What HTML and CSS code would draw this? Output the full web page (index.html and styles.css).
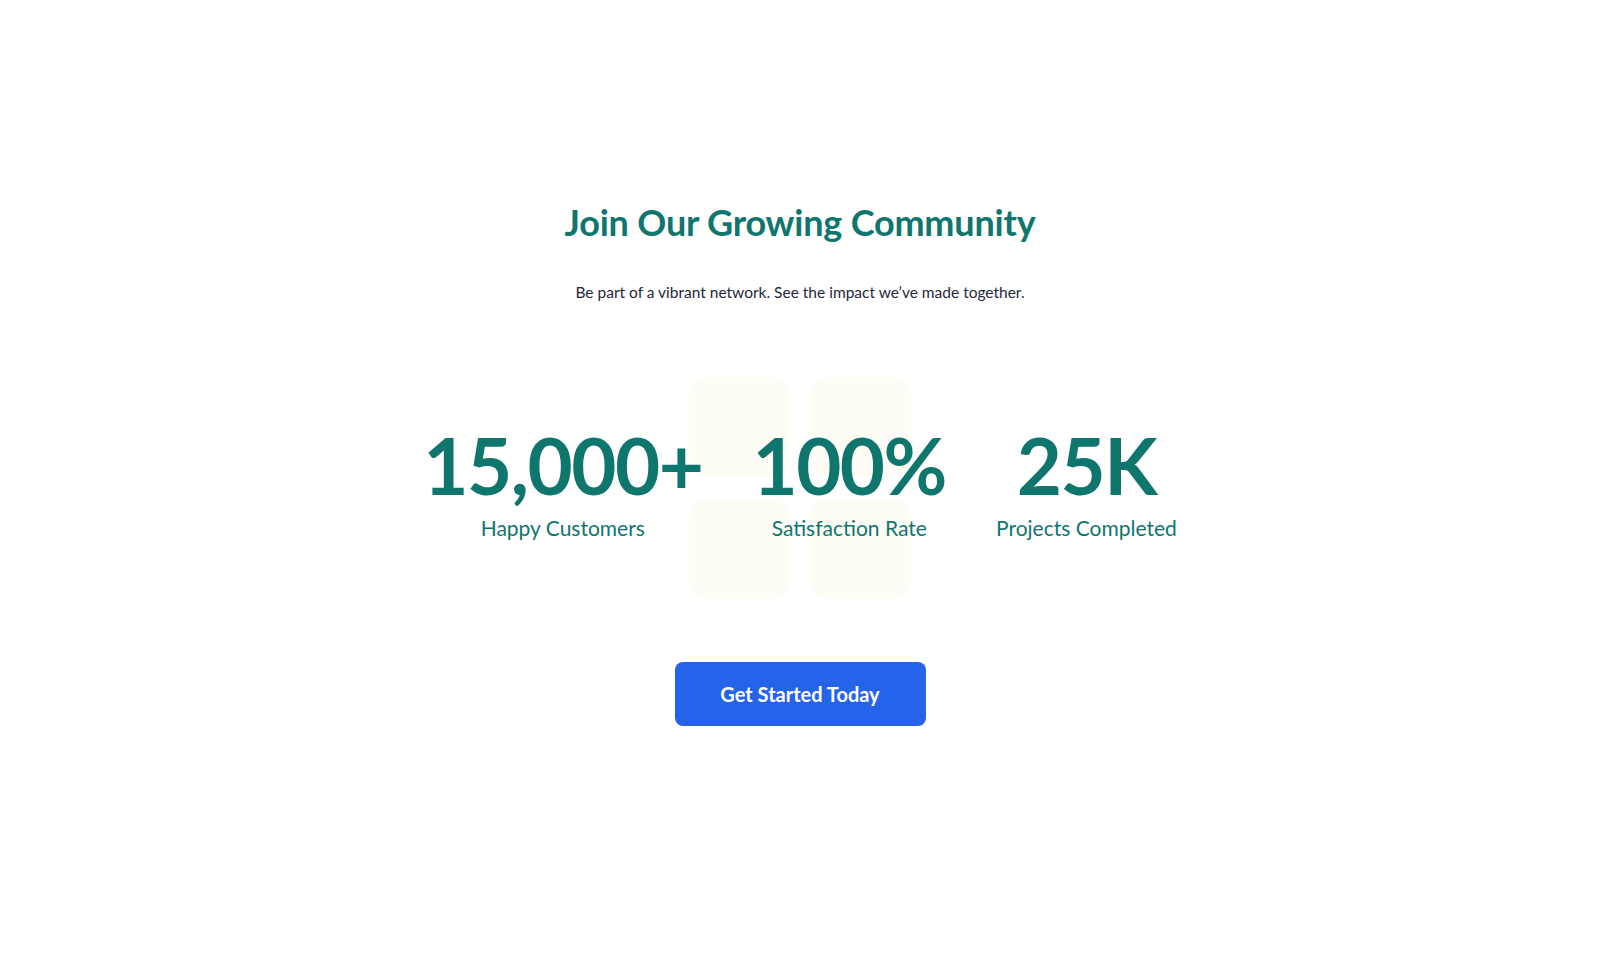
FILE: index.html
```html
<!DOCTYPE html>
<html lang="en">
<head>
<meta charset="utf-8">
<title>Join Our Growing Community</title>
<link rel="stylesheet" href="styles.css">
</head>
<body>
<section class="community">
  <h1 class="title">Join Our Growing Community</h1>
  <p class="subtitle">Be part of a vibrant network. See the impact we’ve made together.</p>
  <div class="stats-wrap">
    <div class="deco" aria-hidden="true">
      <span class="tile"></span><span class="tile"></span><span class="tile"></span><span class="tile"></span>
    </div>
    <div class="stats">
      <div class="stat"><div class="num">15,000+</div><div class="label">Happy Customers</div></div>
      <div class="stat"><div class="num">100%</div><div class="label">Satisfaction Rate</div></div>
      <div class="stat"><div class="num">25K</div><div class="label">Projects Completed</div></div>
    </div>
  </div>
  <a class="cta" href="#">Get Started Today</a>
</section>
</body>
</html>
```
FILE: styles.css
```css
html, body {
  margin: 0;
  padding: 0;
  background: #ffffff;
}
body {
  font-family: "Lato", "Noto Sans", sans-serif;
  width: 1600px;
  height: 978px;
  overflow: hidden;
}
.community {
  display: flex;
  flex-direction: column;
  align-items: center;
  padding-top: 200px;
}
.title {
  margin: 0;
  font-size: 36px;
  line-height: 44px;
  font-weight: 700;
  color: #0f766e;
  letter-spacing: -0.2px;
}
.subtitle {
  margin: 38px 0 0;
  font-size: 15.5px;
  line-height: 20px;
  color: #1e293b;
}
.stats-wrap {
  position: relative;
  margin-top: 118px;
  width: 100%;
  display: flex;
  justify-content: center;
}
.deco {
  position: absolute;
  left: 50%;
  top: 50%;
  transform: translate(-50%, calc(-50% + 7px));
  display: grid;
  grid-template-columns: 100px 100px;
  grid-template-rows: 100px 100px;
  gap: 22px;
  z-index: 0;
}
.tile {
  background: #fdfcf5;
  border-radius: 20px;
}
.stats {
  position: relative;
  z-index: 1;
  display: flex;
  gap: 50px;
  align-items: flex-start;
}
.stat {
  display: flex;
  flex-direction: column;
  align-items: center;
}
.num {
  font-size: 78px;
  line-height: 90px;
  font-weight: 700;
  color: #0f766e;
  letter-spacing: -1.5px;
}
.label {
  margin-top: 4px;
  font-size: 21px;
  line-height: 28px;
  color: #0f766e;
}
.cta {
  margin-top: 120px;
  display: flex;
  align-items: center;
  justify-content: center;
  width: 251px;
  height: 64px;
  box-sizing: border-box;
  background: #2563eb;
  color: #ffffff;
  border-radius: 8px;
  text-decoration: none;
  font-size: 20px;
  font-weight: 700;
}
```
